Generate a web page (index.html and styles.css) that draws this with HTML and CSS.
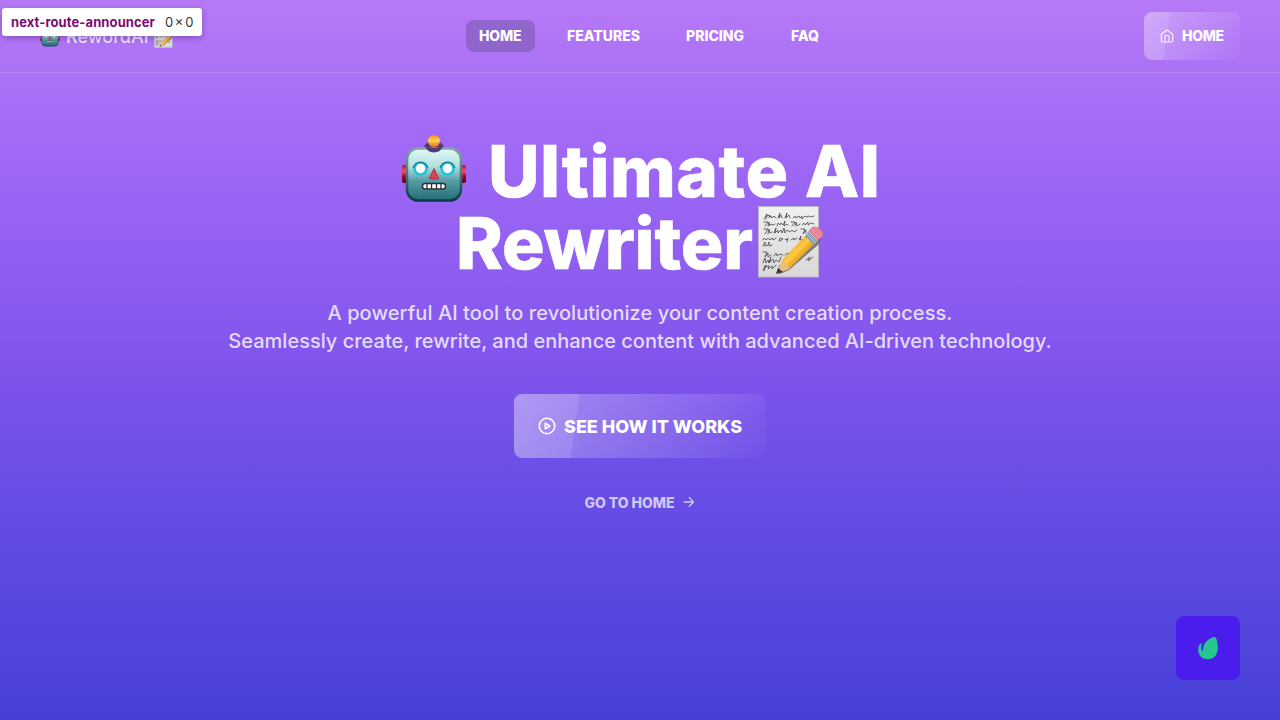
FILE: index.html
```html
<!DOCTYPE html>
<html lang="en">
<head>
<meta charset="utf-8">
<title>RewordAI</title>
<link rel="stylesheet" href="styles.css">
</head>
<body>
<svg class="defs" width="0" height="0" aria-hidden="true">
  <defs>
    <linearGradient id="face" x2="0" y2="1"><stop stop-color="#e1fbf8"/><stop offset=".35" stop-color="#b1dfdd"/><stop offset=".62" stop-color="#559da6"/><stop offset="1" stop-color="#236c77"/></linearGradient>
    <linearGradient id="rim" x2="0" y2="1"><stop stop-color="#85a5aa"/><stop offset=".4" stop-color="#557f86"/><stop offset="1" stop-color="#073d47"/></linearGradient>
    <linearGradient id="ear" x2="0" y2="1"><stop stop-color="#b50c38"/><stop offset=".35" stop-color="#ff4b67"/><stop offset=".65" stop-color="#a60024"/><stop offset="1" stop-color="#4c001c"/></linearGradient>
    <linearGradient id="bulb" x2="0" y2="1"><stop stop-color="#ff8b08"/><stop offset=".45" stop-color="#ffd34f"/><stop offset="1" stop-color="#f17012"/></linearGradient>
    <linearGradient id="paper" x2="0" y2="1"><stop stop-color="#f1f1f0"/><stop offset="1" stop-color="#d8d7d9"/></linearGradient>
    <linearGradient id="wood" x2="1" y2="1"><stop stop-color="#ffd155"/><stop offset=".5" stop-color="#f8b82e"/><stop offset="1" stop-color="#bd7410"/></linearGradient>
    <symbol id="robot" viewBox="0 0 66 68">
      <path d="M23 12Q24 7 33 6Q42 7 43 12Q40 17.500 33 17.500Q26 17.500 23 12" fill="#553974"/>
      <circle cx="33" cy="6" r="6" fill="url(#bulb)"/>
      <rect x="1" y="30" width="6" height="18" rx="2" fill="url(#ear)"/>
      <rect x="59" y="30" width="6" height="18" rx="2" fill="url(#ear)"/>
      <rect x="6" y="13.500" width="54" height="52" rx="11" fill="url(#face)" stroke="url(#rim)" stroke-width="2.600"/>
      <path d="M24.500 11Q33 15 41.500 11Q40 17.500 33 17.500Q26 17.500 24.500 11" fill="#553974"/>
      <g fill="#fff" stroke="#20c5dc" stroke-width="2.600"><circle cx="19.500" cy="33.500" r="6"/><circle cx="46.500" cy="33.500" r="6"/></g>
      <path d="M12 33a7.800 7.800 0 0 1 15 0M39 33a7.800 7.800 0 0 1 15 0" fill="none" stroke="#147e96" stroke-width="1.200"/>
      <path d="M33 33.500L37.800 43.500Q33 45 28.200 43.500Z" fill="#df4053" stroke="#a52b40" stroke-width=".8"/>
      <rect x="21.500" y="48.500" width="23" height="5.500" rx="2.500" fill="#fff" stroke="#332e35" stroke-width="1.500"/>
      <path d="M26 49v5M30.500 49v5M35.500 49v5M40 49v5" stroke="#332e35" stroke-width="1.300"/>
    </symbol>
    <symbol id="memo" viewBox="0 0 66 72">
      <rect x=".5" y=".5" width="60" height="70.500" fill="url(#paper)" stroke="#b9b4c2"/>
      <g fill="none" stroke="#4b4b50" stroke-width=".85" stroke-linecap="round" stroke-linejoin="round">
        <path d="M6 13l3-5-1 5m1-3l3-1-1 3l2-2 1 2 2-2 2 2M20 12l2-5-1 5 2-3 1 3M27 12l2-5-1 5 3-3 1 3M35 12l2-2 1 2 3-2 1 2 2-2v3l3-3 2 1 2-1 2 1 3-1"/>
        <path d="M6 16h4l-3 4m3 0l1-4 0 4 2-2 2 1 2-1M19 20l1-3 2 2 1-2 2 2 2-4-1 5 3-2 1 1M33 16h4l-3 4m3 0l1-4 1 4 3-2M44 19l2-2 1 2 3-3 0 3 3-2 3 1"/>
        <path d="M6 23h4l-3 5m3 0l1-5 1 4 2-1M16 27l2-5-1 5 3-3v3l3-3 1 3 2-5 1 5 2-3 3 2 2-2 2 2 3-2M43 23h4l-2 5 3-4v3"/>
        <path d="M5 34l1-2 2 2 2-2 2 2 2-2 1 2 3-2M21 35l1-3 3 1-3 2m5-2l1 1 2-2-1 4M33 34l3-2v2l3-2M41 34l2-4-1 4 3-1"/>
        <path d="M5 40l2-4 0 4 3-1 1-3v4l3-1M5 46h4l-2 5 3-4v4l3-2M16 50l2-3 1 3 3-2 3 1M27 49l3-2 2 2 3-2"/>
        <path d="M5 57l2-5 1 5 2-3 1 3 2-6-2 6 4-4 1 4 2-3 3 2 2-5M28 55l3-3 2 2M48 54l4-3-2 4 5-4"/>
        <path d="M5 64l3-5-2 6m0-4l5-1-1 3 4-3v3l4-4M20 64l2-5-1 5 3-2"/>
      </g>
      <path d="M20 69L29 61L49 43L65 27L60 39L31 64Z" fill="#494849" opacity=".65"/>
      <path d="M24 54L48 29L56 38L31 63Z" fill="url(#wood)"/>
      <path d="M26 55L50 31L53 34L28 59Z" fill="#ffc646"/>
      <path d="M18 68L24 54Q26 54 27 58Q31 59 31 63Z" fill="#e9bd80"/>
      <path d="M18 68L20 62L25 66Z" fill="#333"/>
      <path d="M47 30L51 25L60 34L56 39Z" fill="#87a2af"/>
      <path d="M49 28L58 37M51 26L60 35" stroke="#c2d1d8" stroke-width="1"/>
      <path d="M51 25Q55 19 60 22Q67 26 64 31L60 34Z" fill="#ef879c" stroke="#c56580" stroke-width=".7"/>
    </symbol>
  </defs>
</svg>
<header class="header">
  <a class="logo"><svg class="logo-robot"><use href="#robot"/></svg><span>RewordAI</span><svg class="logo-memo"><use href="#memo"/></svg></a>
  <nav class="nav"><a class="link active">HOME</a><a class="link features">FEATURES</a><a class="link pricing">PRICING</a><a class="link faq">FAQ</a></nav>
  <a class="glass home-button">
    <svg width="14" height="14" viewBox="0 0 14 14" fill="none" stroke="currentColor" stroke-width="1.200" stroke-linejoin="round"><path d="M1.300 5.300L7 1l5.700 4.300v6.200q0 1.500-1.500 1.500H2.800q-1.500 0-1.500-1.500ZM5 13V7.200q0-.7.700-.7h2.600q.7 0 .7.700V13"/></svg>
    <span>HOME</span>
  </a>
</header>
<main class="hero">
  <h1 class="title">
    <span class="line"><svg class="robot"><use href="#robot"/></svg><span class="ultimate">Ultimate AI</span></span>
    <span class="line"><span class="rewriter">Rewriter</span><svg class="memo"><use href="#memo"/></svg></span>
  </h1>
  <p class="intro"><span class="intro-one">A powerful AI tool to revolutionize your content creation process.</span><br><span class="intro-two">Seamlessly create, rewrite, and enhance content with advanced AI-driven technology.</span></p>
  <a class="glass cta">
    <svg width="18" height="18" viewBox="0 0 18 18" fill="none" stroke="currentColor" stroke-width="1.600" stroke-linejoin="round"><circle cx="9" cy="9" r="7.700"/><path d="M7.300 6.200v5.600L11.800 9Z"/></svg>
    <span>SEE HOW IT WORKS</span>
  </a>
  <a class="go"><span>GO TO HOME</span><svg width="12" height="12" viewBox="0 0 12 12" fill="none" stroke="currentColor" stroke-width="1.300" stroke-linecap="round" stroke-linejoin="round"><path d="M1.200 6h9.300M6.300 1.700L10.500 6l-4.200 4.300"/></svg></a>
</main>
<a class="badge"><svg width="20" height="23" viewBox="0 0 20 23"><path d="M15.500.2C17.500-.4 18.200.7 18.800 3C20.600 9.200 20.200 15.800 17 19.200C14.200 22.700 6.300 23.400 2.700 19.600C-.4 16.500-.7 10.500 2 7C2.700 6.100 3.700 6.500 3.500 7.500C3.100 9.500 3 12 4 13.800C4.500 14.500 4.900 14.300 4.900 13.500C5.100 7.200 8.700 2.100 15.500.2Z" fill="#26c78c"/></svg></a>
<div class="inspect-tip"><strong>next-route-announcer</strong><span>0 × 0</span></div>
</body>
</html>
```
FILE: styles.css
```css
* { box-sizing: border-box; }
body {
  margin: 0;
  height: 720px;
  overflow: hidden;
  font-family: Inter, "Liberation Sans", sans-serif;
  color: #fff;
  background: linear-gradient(180deg, #b679f6 0%, #a56cf6 16%, #8c5cf0 40%, #7c52ec 54%, #664de5 70%, #4640d9 100%);
}
.defs { position: absolute; }
svg { flex: none; }
.header {
  height: 73px;
  padding: 0 40px 1px;
  display: flex;
  align-items: center;
  justify-content: space-between;
  border-bottom: 1px solid rgba(255,255,255,.12);
}
.logo { display: flex; align-items: center; width: 426px; height: 24px; padding-top: 2px; font-size: 18px; font-weight: 500; color: rgba(255,255,255,.82); }
.logo span { width: 88px; white-space: nowrap; }
.logo-robot { width: 20px; height: 21px; margin-right: 6px; }
.logo-memo { width: 20px; height: 22px; }
.nav { display: flex; gap: 19px; width: 678px; }
.link { height: 32px; padding: 0 13px; line-height: 32px; font-size: 14px; font-weight: 800; letter-spacing: 0; border-radius: 8px; white-space: nowrap; }
.active { width: 69px; letter-spacing: -.2px; background: rgba(92,76,137,.38); }
.features { width: 100px; }
.pricing { width: 86px; }
.glass {
  display: flex;
  align-items: center;
  border-radius: 8px;
  font-weight: 800;
  white-space: nowrap;
}
.home-button {
  width: 96px;
  height: 48px;
  padding-left: 16px;
  gap: 8px;
  font-size: 14px;
  letter-spacing: -.3px;
  background: linear-gradient(98deg, rgba(255,255,255,.10) 25%, transparent 25.500%), linear-gradient(120deg, rgba(255,255,255,.31), rgba(255,255,255,.02));
}
.home-button svg { opacity: .85; }
.hero { display: flex; flex-direction: column; align-items: center; padding-top: 63px; }
.title { margin: 0; width: 640px; font-size: 71px; line-height: 71px; font-weight: 800; -webkit-text-stroke: .6px #fff; }
.line { display: flex; justify-content: center; height: 72px; white-space: nowrap; }
.robot { width: 66px; height: 68px; margin: -1px 21px 0 0; }
.ultimate { width: 391px; letter-spacing: .5px; }
.rewriter { width: 302px; letter-spacing: -.2px; }
.memo { width: 66px; height: 72px; margin-top: -2px; }
.intro { margin: 19px 0 0; font-size: 20px; line-height: 28px; font-weight: 500; text-align: center; color: rgba(255,255,255,.8); white-space: nowrap; }
.intro-one { letter-spacing: .07px; }
.cta {
  width: 252px;
  height: 64px;
  margin-top: 39px;
  padding-left: 24px;
  gap: 8px;
  font-size: 18px;
  letter-spacing: 0;
  background: linear-gradient(98deg, rgba(255,255,255,.10) 25%, transparent 25.200%), linear-gradient(120deg, rgba(255,255,255,.34), rgba(255,255,255,.02));
}
.go { display: flex; align-items: center; gap: 9px; height: 20px; margin-top: 34px; font-size: 14px; font-weight: 800; letter-spacing: -.05px; color: rgba(255,255,255,.7); white-space: nowrap; }
.badge { position: absolute; right: 40px; bottom: 40px; display: flex; align-items: center; justify-content: center; width: 64px; height: 64px; border-radius: 8px; background: #4a1dec; }
.inspect-tip { position: absolute; left: 2px; top: 8px; display: flex; align-items: center; gap: 10px; width: 200px; height: 28px; padding-left: 9px; border-radius: 3px; background: #fff; box-shadow: 0 2px 6px rgba(45,20,80,.35); color: #33343a; font-size: 13px; white-space: nowrap; }
.inspect-tip strong { color: #7c0b70; font-weight: 700; letter-spacing: .1px; }
.inspect-tip span { word-spacing: -2px; }
```
